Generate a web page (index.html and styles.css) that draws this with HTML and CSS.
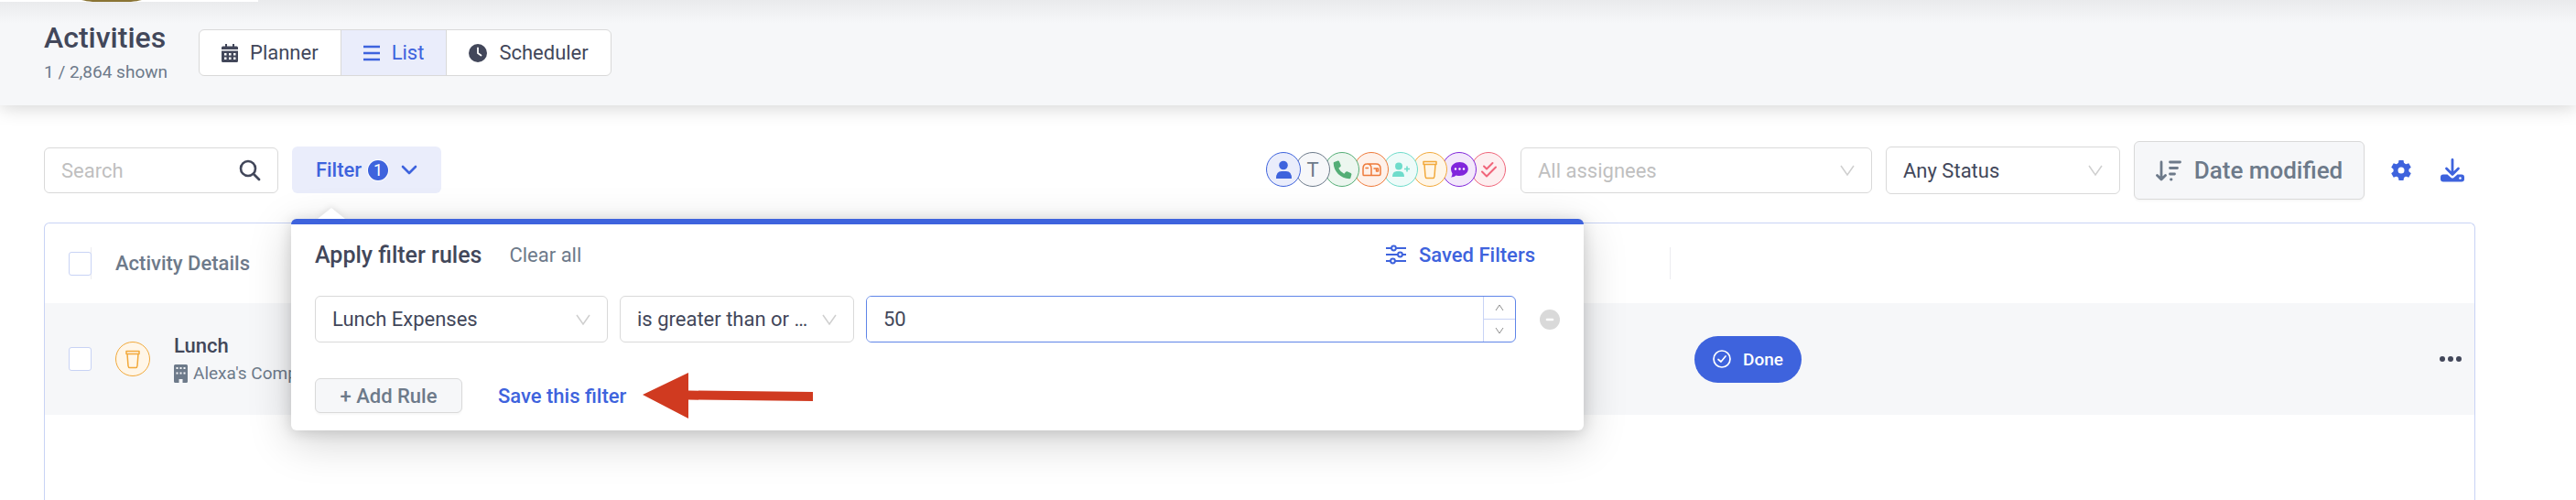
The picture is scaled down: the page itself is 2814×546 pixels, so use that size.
FILE: index.html
```html
<!DOCTYPE html>
<html lang="en">
<head>
	<meta charset="UTF-8">
	<title>Activities</title>
	<link rel="stylesheet" href="styles.css">
</head>
<body>

<header class="page-head">
	<div class="logo-tab">
		<svg width="282" height="2" viewBox="0 0 282 2"><path d="M89 0h66c-8 2-20 3-33 3s-25-1-33-3z" fill="#8a7434"/></svg>
	</div>
	<div class="heading">
		<h1>Activities</h1>
		<p>1 / 2,864 shown</p>
	</div>
	<nav class="views">
		<button type="button" class="view">
			<svg width="18" height="20" viewBox="0 0 18 20"><path fill="currentColor" fill-rule="evenodd" d="M4 0h2v2.500h6V0h2v2.500h2.500Q18 2.500 18 4v2H0V4Q0 2.500 1.500 2.500H4zM0 7.500h18v11q0 1.500-1.500 1.500h-15Q0 20 0 18.500zM3 10v2.500h2.500V10zm5 0v2.500h2.500V10zm5 0v2.500h2.500V10zM3 14.500V17h2.500v-2.500zm5 0V17h2.500v-2.500zm5 0V17h2.500v-2.500z"/></svg>
			Planner
		</button>
		<button type="button" class="view active">
			<svg width="18" height="20" viewBox="0 0 18 20"><path stroke="currentColor" stroke-width="2.400" d="M0 3h18M0 10h18M0 17h18"/></svg>
			List
		</button>
		<button type="button" class="view">
			<svg width="20" height="20" viewBox="0 0 20 20"><circle cx="10" cy="10" r="10" fill="currentColor"/><path fill="none" stroke="#fff" stroke-width="1.800" stroke-linecap="round" d="M10 4.500V10l3.500 2.500"/></svg>
			Scheduler
		</button>
	</nav>
</header>

<main class="content">
	<div class="toolbar">
		<label class="search">
			<input type="text" placeholder="Search" aria-label="Search">
			<svg width="24" height="24" viewBox="0 0 24 24"><circle cx="10" cy="10" r="8" fill="none" stroke="currentColor" stroke-width="2.600"/><path stroke="currentColor" stroke-width="2.800" stroke-linecap="round" d="M16 16l6 6"/></svg>
		</label>

		<div class="filter">
			<button type="button" class="filter-btn">
				Filter <span class="count">1</span>
				<svg width="18" height="12" viewBox="0 0 18 12"><path fill="none" stroke="currentColor" stroke-width="2.600" stroke-linecap="round" stroke-linejoin="round" d="M2 2l7 7 7-7"/></svg>
			</button>

			<!-- filter popover -->
			<form class="popover">
				<div class="pop-head">
					<h2>Apply filter rules</h2>
					<button type="button" class="clear">Clear all</button>
					<button type="button" class="saved">
						<svg width="22" height="22" viewBox="0 0 22 22"><g fill="none" stroke="currentColor" stroke-width="2"><path d="M0 4h6M11 4h11M0 11h13M18 11h4M0 18h5M10 18h12"/><circle cx="8.500" cy="4" r="2.400"/><circle cx="15.500" cy="11" r="2.400"/><circle cx="7.500" cy="18" r="2.400"/></g></svg>
						Saved Filters
					</button>
				</div>
				<div class="rule">
					<div class="select field">
						<select aria-label="Field"><option>Lunch Expenses</option></select>
						<svg width="16" height="12" viewBox="0 0 16 12"><path d="M1 1l7 10 7-10"/></svg>
					</div>
					<div class="select operator">
						<select aria-label="Operator"><option>is greater than or equal to</option></select>
						<svg width="16" height="12" viewBox="0 0 16 12"><path d="M1 1l7 10 7-10"/></svg>
					</div>
					<div class="number">
						<input type="text" inputmode="numeric" value="50" aria-label="Value">
						<div class="steps">
							<button type="button" aria-label="Increase"><svg width="10" height="8" viewBox="0 0 10 8"><path d="M1 7l4-6 4 6"/></svg></button>
							<button type="button" aria-label="Decrease"><svg width="10" height="8" viewBox="0 0 10 8"><path d="M1 1l4 6 4-6"/></svg></button>
						</div>
					</div>
					<button type="button" class="remove" aria-label="Remove rule">
						<svg width="24" height="24" viewBox="0 0 24 24"><circle cx="12" cy="12" r="11" fill="#d9d9d9"/><path stroke="#fff" stroke-width="2.600" stroke-linecap="round" d="M9 12h6"/></svg>
					</button>
				</div>
				<div class="pop-foot">
					<button type="button" class="add">+ Add Rule</button>
					<a class="save" href="#">Save this filter</a>
					<svg class="arrow" width="186" height="50" viewBox="0 0 186 50"><path fill="#d03a20" d="M0 24L50 0v19.500l136 1.500v10L50 29.500V50z"/></svg>
				</div>
			</form>
		</div>

		<div class="types">
			<button type="button" class="type blue" aria-label="Meeting"><svg viewBox="0 0 38 38"><circle cx="19" cy="14.500" r="4.800" fill="currentColor"/><path fill="currentColor" d="M11 29q0-8 6-8h5q6 0 6 8z"/></svg></button>
			<button type="button" class="type grey">T</button>
			<button type="button" class="type green" aria-label="Call"><svg viewBox="0 0 38 38"><path fill="currentColor" d="M10.500 11l4-1.500q1-.3 1.500.8l1.700 4.200q.3.900-.4 1.500l-2 1.700q2 4.200 6 6l1.800-2q.6-.8 1.500-.4l4 1.700q1 .5.800 1.500l-1 3.800q-.3 1-1.300 1C17.500 29 9.700 21 9.700 12q0-.8.800-1z"/></svg></button>
			<button type="button" class="type orange" aria-label="Mail"><svg viewBox="0 0 38 38"><g fill="none" stroke="currentColor" stroke-width="1.500" stroke-linejoin="round" stroke-linecap="round"><path d="M14 13h10q5 0 5 5v6q0 1.500-1.500 1.500h-17Q10 25.500 10 24v-6q0-5 4.500-5t4.500 5v7.500M13 17.500h2.500M22 18h4.500v3h-2v-3"/></g></svg></button>
			<button type="button" class="type teal" aria-label="Referral"><svg viewBox="0 0 38 38"><circle cx="17" cy="15.500" r="4" fill="currentColor"/><path fill="currentColor" d="M10 27q0-6 5-6h3q5 0 5 6z"/><path stroke="currentColor" stroke-width="1.600" d="M26 15.500v6M23 18.500h6"/></svg></button>
			<button type="button" class="type amber" aria-label="Lunch"><svg viewBox="0 0 38 38"><path fill="none" stroke="currentColor" stroke-width="1.500" stroke-linejoin="round" d="M12 10.500h14v3H12zM13 13.500l1 13q.2 2 1.700 2h6.600q1.500 0 1.700-2l1-13"/></svg></button>
			<button type="button" class="type purple" aria-label="Message"><svg viewBox="0 0 38 38"><path fill="currentColor" d="M19.500 11c5.200 0 9.300 3.200 9.300 7.500s-4.100 7.500-9.300 7.500q-2 0-3.800-.6-2 2.100-5.700 2.100 1.500-1.500 1.500-4-1.500-2.200-1.500-5c0-4.300 4.300-7.500 9.500-7.500z"/><g fill="#fff"><circle cx="15" cy="18.500" r="1.200"/><circle cx="19.500" cy="18.500" r="1.200"/><circle cx="24" cy="18.500" r="1.200"/></g></svg></button>
			<button type="button" class="type red" aria-label="Task"><svg viewBox="0 0 38 38"><path fill="none" stroke="currentColor" stroke-width="2" stroke-linecap="round" stroke-linejoin="round" d="M14 15.500l3 3 6.500-6.500M12 21.500l5 5L27 16.500"/></svg></button>
		</div>

		<div class="select assignees">
			<select aria-label="Assignees"><option>All assignees</option></select>
			<svg width="16" height="12" viewBox="0 0 16 12"><path d="M1 1l7 10 7-10"/></svg>
		</div>
		<div class="select status">
			<select aria-label="Status"><option>Any Status</option></select>
			<svg width="16" height="12" viewBox="0 0 16 12"><path d="M1 1l7 10 7-10"/></svg>
		</div>
		<button type="button" class="sort">
			<svg width="28" height="24" viewBox="0 0 28 24"><g fill="none" stroke="currentColor" stroke-width="2.800" stroke-linecap="round" stroke-linejoin="round"><path d="M6 3v18M1.500 17.500L6 22l4.500-4.500M15.500 3h11M15.500 9.500h8M15.500 16h5M16.500 22h.5"/></g></svg>
			Date modified
		</button>
		<div class="tools">
			<button type="button" class="tool" aria-label="Settings">
				<svg width="22" height="22" viewBox="0 0 22 22"><g fill="currentColor"><path id="tooth" d="M8.500 0h5l1 5h-7z"/><use href="#tooth" transform="rotate(60 11 11)"/><use href="#tooth" transform="rotate(120 11 11)"/><use href="#tooth" transform="rotate(180 11 11)"/><use href="#tooth" transform="rotate(240 11 11)"/><use href="#tooth" transform="rotate(300 11 11)"/></g><circle cx="11" cy="11" r="6" fill="none" stroke="currentColor" stroke-width="5"/></svg>
			</button>
			<button type="button" class="tool" aria-label="Download">
				<svg width="26" height="26" viewBox="0 0 26 26"><path fill="none" stroke="currentColor" stroke-width="2.800" stroke-linecap="round" stroke-linejoin="round" d="M13 1.500V17M6.500 11l6.500 6.500 6.500-6.500"/><path fill="currentColor" fill-rule="evenodd" d="M3 17.500h4.500l4 3.500q1.500 1 3 0l4-3.500H23q3 0 3 3v2q0 3-3 3H3q-3 0-3-3v-2q0-3 3-3zm18.500 2.700a1.300 1.300 0 1 0 .01 0z"/></svg>
			</button>
		</div>
	</div>

	<div class="table-wrap">
		<table class="activities">
			<thead>
				<tr>
					<th class="c-check"><input type="checkbox" aria-label="Select all"></th>
					<th class="c-details">Activity Details</th>
					<th class="c-status"></th>
					<th class="c-more"></th>
				</tr>
			</thead>
			<tbody>
				<tr>
					<td class="c-check"><input type="checkbox" aria-label="Select Lunch"></td>
					<td class="c-details">
						<div class="activity">
							<span class="type amber"><svg viewBox="0 0 38 38"><path fill="none" stroke="currentColor" stroke-width="1.500" stroke-linejoin="round" d="M12 10.500h14v3H12zM13 13.500l1 13q.2 2 1.700 2h6.600q1.500 0 1.700-2l1-13"/></svg></span>
							<div>
								<div class="name">Lunch</div>
								<div class="company">
									<svg width="15" height="20" viewBox="0 0 15 20"><path fill="currentColor" fill-rule="evenodd" d="M1.500 0h12Q15 0 15 1.500v17q0 1.500-1.500 1.500H9.500v-4h-4v4h-4Q0 20 0 18.500v-17Q0 0 1.500 0zM2.500 3v2h2V3zm4 0v2h2V3zm4 0v2h2V3zm-8 5.500v2h2v-2zm4 0v2h2v-2zm4 0v2h2v-2z"/></svg>
									Alexa's Company
								</div>
							</div>
						</div>
					</td>
					<td class="c-status">
						<button type="button" class="done">
							<svg width="20" height="20" viewBox="0 0 20 20"><g fill="none" stroke="currentColor" stroke-width="1.700" stroke-linecap="round" stroke-linejoin="round"><circle cx="10" cy="10" r="9"/><path d="M6 10.500l3 2.500 5-6"/></g></svg>
							Done
						</button>
					</td>
					<td class="c-more">
						<button type="button" class="more" aria-label="More">
							<svg width="24" height="6" viewBox="0 0 24 6"><g fill="currentColor"><circle cx="3" cy="3" r="3"/><circle cx="12" cy="3" r="3"/><circle cx="21" cy="3" r="3"/></g></svg>
						</button>
					</td>
				</tr>
			</tbody>
		</table>
	</div>
</main>

</body>
</html>
```
FILE: styles.css
```css
* {
	box-sizing: border-box;
}

html, body {
	height: 100%;
}

body {
	margin: 0;
	display: flex;
	flex-direction: column;
	overflow: hidden;
	font-family: Roboto, "Liberation Sans", sans-serif;
	font-size: 22px;
	color: #42475a;
	background: #fff;
}

h1, h2, p {
	margin: 0;
	font-weight: 500;
}

button, input, select {
	font: inherit;
	color: inherit;
	margin: 0;
}

button {
	padding: 0;
	border: 0;
	background: none;
	display: flex;
	align-items: center;
	justify-content: center;
	white-space: nowrap;
	cursor: pointer;
}

svg {
	display: block;
	flex: none;
}

/* header */
.page-head {
	position: relative;
	display: flex;
	align-items: flex-start;
	gap: 34px;
	height: 115px;
	padding: 22px 48px 0;
	background: linear-gradient(#e9eaec, #f6f7f9 26px);
	box-shadow: 0 2px 20px rgba(0, 0, 0, 0.18);
}

.logo-tab {
	position: absolute;
	top: 0;
	left: 0;
	background: #fff;
}

h1 {
	font-size: 32px;
	line-height: 38px;
}

.heading p {
	margin-top: 7px;
	font-size: 19px;
	font-weight: 400;
	line-height: 24px;
	color: #6d7a8a;
}

.views {
	display: flex;
	margin-top: 10px;
	height: 51px;
	border: 1px solid #d9d9d9;
	border-radius: 6px;
	background: #fff;
	overflow: hidden;
}

.view {
	gap: 13px;
	padding: 0 24px;
}

.view.active {
	border: solid #d9d9d9;
	border-width: 0 1px;
	background: #eaedfb;
	color: #3e63dd;
}

/* toolbar */
.content {
	flex: 1;
	display: flex;
	flex-direction: column;
	padding: 39px 110px 0 48px;
}

.toolbar {
	display: flex;
	align-items: center;
	height: 64px;
}

.search {
	display: flex;
	align-items: center;
	width: 256px;
	height: 50px;
	padding: 0 18px;
	border: 1px solid #d9d9d9;
	border-radius: 6px;
}

.search input {
	flex: 1;
	min-width: 0;
	padding: 0;
	border: 0;
	outline: 0;
	background: none;
}

.search input::placeholder {
	color: #bfbfbf;
}

.filter {
	position: relative;
	height: 52px;
	margin-left: 15px;
}

.filter-btn {
	width: 163px;
	height: 51px;
	border-radius: 6px;
	background: #eaedfb;
	color: #3e63dd;
	font-weight: 500;
	gap: 7px;
}

.count {
	width: 22px;
	margin-right: 7px;
	border-radius: 50%;
	background: #3e63dd;
	box-shadow: 0 0 0 1px #fff;
	color: #fff;
	font-size: 18px;
	font-weight: 400;
	line-height: 22px;
}

.types {
	display: flex;
	align-items: flex-start;
	height: 40px;
	margin-left: auto;
}

.type {
	width: 38px;
	height: 38px;
	border: 1px solid currentColor;
	border-radius: 50%;
	flex: none;
	font-size: 22px;
}

.type svg {
	width: 38px;
	height: 38px;
	margin: -1px;
}

.types .type {
	position: relative;
	margin-right: -6px;
}

.types .type:nth-child(1) { z-index: 8; }
.types .type:nth-child(2) { z-index: 7; }
.types .type:nth-child(3) { z-index: 6; }
.types .type:nth-child(4) { z-index: 5; }
.types .type:nth-child(5) { z-index: 4; }
.types .type:nth-child(6) { z-index: 3; }
.types .type:nth-child(7) { z-index: 2; }

.blue { color: #3e63dd; background: #eaedfb; }
.grey { color: #6d7a8a; background: #f6f7f9; }
.green { color: #54ae76; background: #ecf6ef; }
.orange { color: #ee7a3a; background: #fef1ea; }
.teal { color: #6edccb; background: #eefbf9; }
.amber { color: #f2a93b; background: #fff6e8; }
.purple { color: #8126dc; background: #f3e8fb; }
.red { color: #f0657a; background: #fdeff0; }

/* selects */
.select {
	position: relative;
	display: flex;
	align-items: center;
	height: 51px;
}

.select select {
	width: 100%;
	height: 100%;
	padding: 0 44px 0 18px;
	border: 1px solid #d9d9d9;
	border-radius: 6px;
	background: #fff;
	appearance: none;
	text-overflow: ellipsis;
	outline: 0;
}

.select svg {
	position: absolute;
	right: 19px;
	fill: none;
	stroke: #cfcfcf;
	stroke-width: 1.5;
	pointer-events: none;
}

.assignees {
	width: 384px;
	height: 50px;
	margin-left: 22px;
}

.assignees select {
	color: #bfbfbf;
}

.status {
	width: 256px;
	height: 52px;
	margin-left: 15px;
}

.sort {
	gap: 14px;
	width: 252px;
	height: 64px;
	margin-left: 15px;
	border: 1px solid #d9d9d9;
	border-radius: 6px;
	background: #f6f7f9;
	box-shadow: 0 2px 2px rgba(0, 0, 0, 0.03);
	color: #6d7a8a;
	font-size: 26px;
	font-weight: 500;
}

.tools {
	display: flex;
	align-items: center;
	gap: 30px;
	padding: 0 12px 0 27px;
}

.tool {
	width: 26px;
	color: #3e63dd;
}

/* filter popover */
.popover {
	position: absolute;
	z-index: 20;
	top: 79px;
	left: -1px;
	width: 1412px;
	padding: 18px 25px 19px 26px;
	border-top: 6px solid #3e63dd;
	border-radius: 6px;
	background: #fff;
	box-shadow: 0 12px 48px rgba(0, 0, 0, 0.18), 0 2px 16px rgba(0, 0, 0, 0.14);
}

.popover::before {
	content: "";
	position: absolute;
	top: -18px;
	left: 29px;
	border: solid transparent;
	border-width: 0 15px 12px;
	border-bottom-color: #fff;
	filter: drop-shadow(0 -2px 3px rgba(0, 0, 0, 0.08));
}

.pop-head {
	display: flex;
	align-items: center;
	height: 30px;
	padding-right: 28px;
}

h2 {
	font-size: 25px;
}

.clear {
	margin-left: 30px;
	color: #6d7a8a;
}

.saved {
	gap: 14px;
	margin-left: auto;
	color: #3e63dd;
	font-weight: 500;
}

.rule {
	display: flex;
	align-items: center;
	gap: 13px;
	margin-top: 30px;
}

.field {
	width: 320px;
}

.operator {
	width: 256px;
}

.number {
	flex: 1;
	display: flex;
	height: 51px;
	border: 1px solid #5f85e8;
	border-radius: 6px;
	overflow: hidden;
}

.number input {
	flex: 1;
	min-width: 0;
	padding: 0 18px;
	border: 0;
	outline: 0;
}

.steps {
	width: 35px;
	display: flex;
	flex-direction: column;
	border-left: 1px solid #c8d3f5;
}

.steps button {
	flex: 1;
	width: 100%;
}

.steps button + button {
	border-top: 1px solid #c8d3f5;
}

.steps svg {
	fill: none;
	stroke: #8c8c8c;
}

.remove {
	margin-left: 12px;
}

.pop-foot {
	display: flex;
	align-items: center;
	margin-top: 39px;
	height: 38px;
}

.add {
	width: 161px;
	height: 38px;
	border: 1px solid #d9d9d9;
	border-radius: 6px;
	background: #f6f7f9;
	box-shadow: 0 2px 2px rgba(0, 0, 0, 0.03);
	color: #6d7a8a;
	font-weight: 500;
}

.save {
	margin-left: 39px;
	color: #3e63dd;
	font-weight: 500;
	text-decoration: none;
}

.arrow {
	margin-left: 18px;
}

/* table */
.table-wrap {
	flex: 1;
	margin-top: 25px;
	border: 1px solid #c8d3f5;
	border-bottom: 0;
	border-radius: 6px 6px 0 0;
}

.activities {
	width: 100%;
	border-collapse: collapse;
	table-layout: fixed;
}

.activities th, .activities td {
	padding: 0;
	text-align: left;
	font-weight: 500;
}

.activities th {
	height: 87px;
	color: #6d7a8a;
}

.activities td {
	height: 122px;
	background: #f6f7f9;
}

.activities .c-check {
	width: 77px;
	padding-left: 26px;
}

.activities .c-details {
	width: 1698px;
}

.activities .c-status {
	padding-left: 27px;
}

.activities .c-more {
	width: 60px;
	padding-left: 22px;
}

th.c-check {
	background: linear-gradient(#ececf0, #ececf0) 50px 50% / 1px 35px no-repeat;
}

th.c-status {
	background: linear-gradient(#ececf0, #ececf0) 0 50% / 1px 35px no-repeat;
}

input[type=checkbox] {
	display: block;
	width: 25px;
	height: 26px;
	border: 1px solid #c8d3f5;
	border-radius: 3px;
	background: #fff;
	appearance: none;
}

.activity {
	display: flex;
	align-items: center;
	gap: 26px;
}

.company {
	display: flex;
	align-items: center;
	gap: 6px;
	margin-top: 6px;
	color: #6d7a8a;
	font-size: 19px;
	font-weight: 400;
	line-height: 24px;
}

.done {
	gap: 13px;
	width: 117px;
	height: 51px;
	border-radius: 26px;
	background: #3e63dd;
	color: #fff;
	font-size: 19px;
	font-weight: 500;
}
```
